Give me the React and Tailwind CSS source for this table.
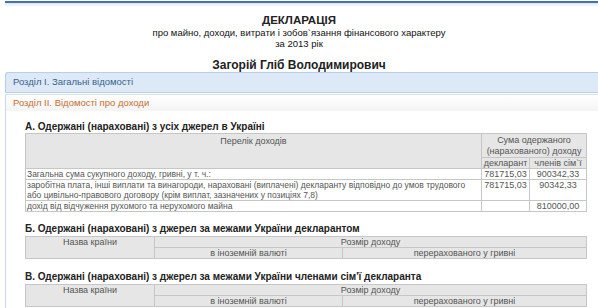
export default function App() {
  const th = "border border-[#c6c6c6] bg-[#e6e6e6] text-[#555] font-normal px-0 leading-[10px] whitespace-nowrap text-[9px]";
  const td = "border border-[#c6c6c6] text-[#555] px-[1px] leading-[10px] align-top whitespace-nowrap";
  const h = "ml-[24px] text-[10px] leading-[13px] font-bold text-[#222]";
  return (
    <div className="w-[598px] h-[308px] overflow-hidden bg-white font-['Liberation_Sans',Arial,sans-serif]">
      <div className="pt-[1px] pl-[5px]">
        <div className="h-[2px] bg-[#4276ab]" />
        <div className="h-[4px] bg-gradient-to-b from-[#dbe6f1] to-white" />
      </div>
      <div className="mt-[6px] text-center text-[#222]">
        <div className="text-[11.5px] leading-[14px] font-bold">ДЕКЛАРАЦІЯ</div>
        <div className="text-[9.5px] leading-[11px] text-[#111]">про майно, доходи, витрати і зобов`язання фінансового характеру</div>
        <div className="text-[9.5px] leading-[11px] text-[#111]">за 2013 рік</div>
        <div className="mt-[9px] text-[12px] leading-[14px] font-bold">Загорій Гліб Володимирович</div>
      </div>
      <div className="ml-[5px] h-[21px] flex items-center pl-[7px] bg-[#dde9f6] border border-r-0 border-[#b8cfe6] rounded-tl-[3px] text-[9.5px] text-[#36638f]">
        Розділ І. Загальні відомості
      </div>
      <div className="ml-[5px] mt-[1px] h-[300px] border-l border-[#c9d9e8]">
        <div className="h-[17px] flex items-center pl-[7px] border-t border-[#d9e2ea] bg-gradient-to-b from-white to-[#f4f4f4] text-[9.5px] text-[#c4702c]">
          Розділ ІІ. Відомості про доходи
        </div>
        <div className="ml-[-5px]">
          <div className={h + " mt-[9px]"}>А. Одержані (нараховані) з усіх джерел в Україні</div>
          <table className="ml-[24px] w-[561px] border-collapse text-[9px] table-fixed">
            <colgroup>
              <col className="w-[456px]" />
              <col className="w-[48px]" />
              <col className="w-[57px]" />
            </colgroup>
            <thead>
              <tr className="h-[24px]">
                <th rowSpan={2} className={th + " align-top pt-[2px]"}>Перелік доходів</th>
                <th colSpan={2} className={th + " leading-[11px]"}>Сума одержаного<br />(нарахованого) доходу</th>
              </tr>
              <tr>
                <th className={th + " text-[8.5px]"}>декларант</th>
                <th className={th + " text-[8.5px]"}>членів сім`ї</th>
              </tr>
            </thead>
            <tbody>
              <tr>
                <td className={td + " text-[8.5px]"}>Загальна сума сукупного доходу, гривні, у т. ч.:</td>
                <td className={td + " text-center"}>781715,03</td>
                <td className={td + " text-center"}>900342,33</td>
              </tr>
              <tr>
                <td className={td + " text-[8.5px]"}>заробітна плата, інші виплати та винагороди, нараховані (виплачені) декларанту відповідно до умов трудового<br />або цивільно-правового договору (крім виплат, зазначених у позиціях 7,8)</td>
                <td className={td + " text-center"}>781715,03</td>
                <td className={td + " text-center"}>90342,33</td>
              </tr>
              <tr>
                <td className={td + " text-[8.5px]"}>дохід від відчуження рухомого та нерухомого майна</td>
                <td className={td}></td>
                <td className={td + " text-center"}>810000,00</td>
              </tr>
            </tbody>
          </table>
          {[
            "Б. Одержані (нараховані) з джерел за межами України декларантом",
            "В. Одержані (нараховані) з джерел за межами України членами сім'ї декларанта",
          ].map((t, i) => (
            <div key={i}>
              <div className={h + (i === 0 ? " mt-[10px]" : " mt-[11px]")}>{t}</div>
              <table className="ml-[24px] mt-[1px] w-[561px] border-collapse table-fixed">
                <colgroup>
                  <col className="w-[129px]" />
                  <col className="w-[188px]" />
                  <col className="w-[244px]" />
                </colgroup>
                <thead>
                  <tr>
                    <th rowSpan={2} className={th + " align-top"}>Назва країни</th>
                    <th colSpan={2} className={th}>Розмір доходу</th>
                  </tr>
                  <tr>
                    <th className={th}>в іноземній валюті</th>
                    <th className={th}>перерахованого у гривні</th>
                  </tr>
                </thead>
              </table>
            </div>
          ))}
        </div>
      </div>
    </div>
  );
}
